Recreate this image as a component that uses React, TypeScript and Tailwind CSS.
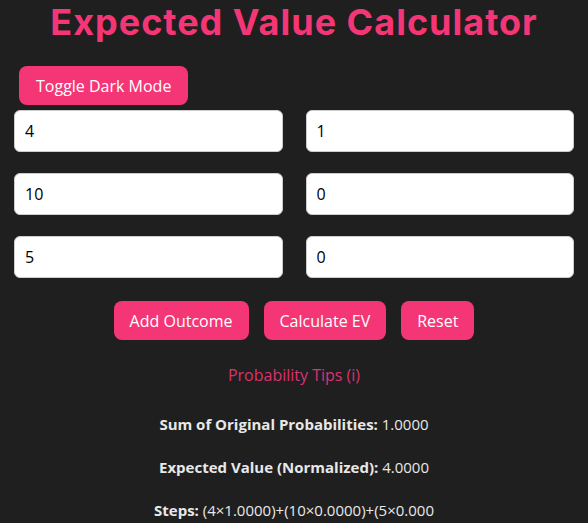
import React, { useState } from 'react';

const pink = 'bg-[#f43676] hover:bg-[#e02a68]';

export default function App() {
  const [rows, setRows] = useState([
    { value: '4', prob: '1' },
    { value: '10', prob: '0' },
    { value: '5', prob: '0' },
  ]);

  const update = (i: number, key: 'value' | 'prob', v: string) => {
    setRows(prev => prev.map((r, j) => (j === i ? { ...r, [key]: v } : r)));
  };

  return (
    <div className="min-h-screen bg-[#1f1f1f] px-[14px] font-['Open_Sans',sans-serif] text-[#e8e8e8]">
      <h1 className="text-center font-['Inter',sans-serif] text-[36px] font-bold leading-[44px] tracking-[1px] text-[#f43676]">
        Expected Value Calculator
      </h1>

      <button className={`mt-[22px] ml-[5px] h-[39px] rounded-lg px-[17px] text-[16px] text-white ${pink}`}>
        Toggle Dark Mode
      </button>

      {/* values / probabilities */}
      <div className="mt-[5px] grid grid-cols-2 gap-x-[23px] gap-y-[21px]">
        {rows.map((r, i) => (
          <React.Fragment key={i}>
            <input
              value={r.value}
              onChange={e => update(i, 'value', e.target.value)}
              className="h-[42px] rounded-md border border-[#cccccc] bg-white px-[10px] text-[16px] text-black outline-none"
            />
            <input
              value={r.prob}
              onChange={e => update(i, 'prob', e.target.value)}
              className="h-[42px] rounded-md border border-[#cccccc] bg-white px-[10px] text-[16px] text-black outline-none"
            />
          </React.Fragment>
        ))}
      </div>

      <div className="mt-[23px] flex justify-center gap-[15px]">
        <button
          onClick={() => setRows(prev => [...prev, { value: '', prob: '' }])}
          className={`h-[39px] rounded-lg px-4 text-[16px] text-white ${pink}`}
        >
          Add Outcome
        </button>
        <button className={`h-[39px] rounded-lg px-4 text-[16px] text-white ${pink}`}>Calculate EV</button>
        <button className={`h-[39px] rounded-lg px-4 text-[16px] text-white ${pink}`}>Reset</button>
      </div>

      <p className="mt-[23px] text-center text-[16px] leading-6 text-[#d9336f]">Probability Tips (i)</p>

      <div className="mx-auto mt-[25px] flex flex-col gap-[19px] text-center text-[15px] leading-6">
        <p>
          <span className="font-bold">Sum of Original Probabilities:</span> 1.0000
        </p>
        <p>
          <span className="font-bold">Expected Value (Normalized):</span> 4.0000
        </p>
        <p>
          <span className="font-bold">Steps:</span> (4×1.0000)+(10×0.0000)+(5×0.000
        </p>
      </div>
    </div>
  );
}
